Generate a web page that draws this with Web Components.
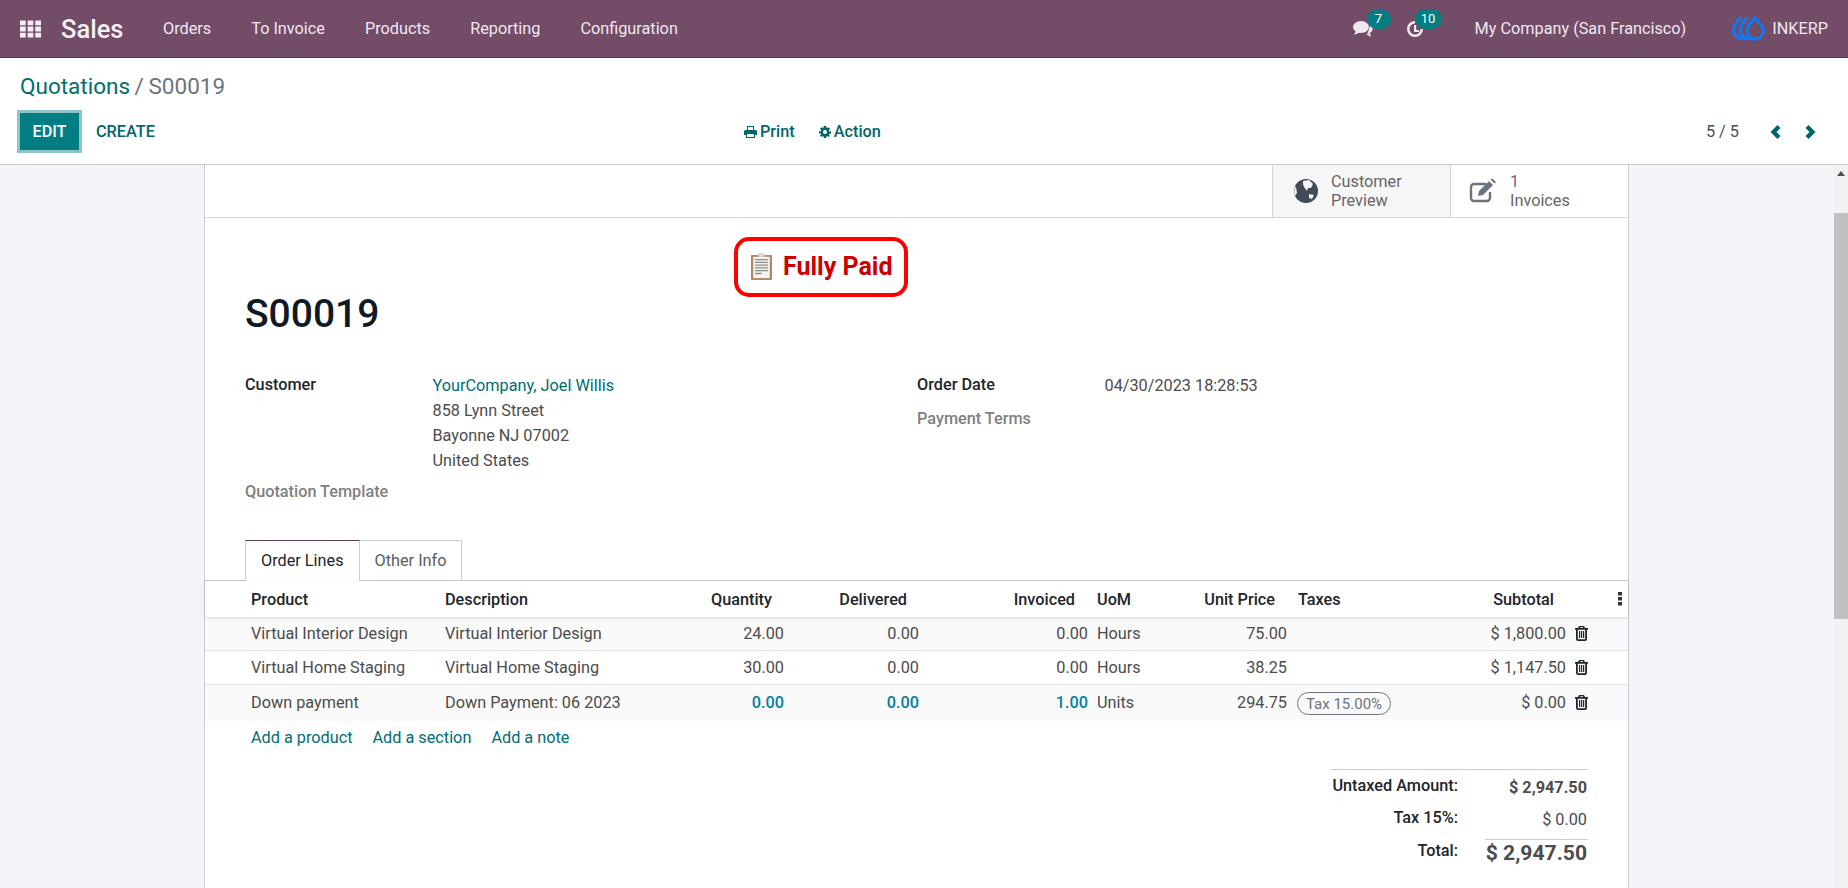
<!DOCTYPE html>
<html lang="en">
<head>
<meta charset="UTF-8">
<title>S00019 - Sales</title>
<style>
    html, body { margin: 0; height: 100%; overflow: hidden; }
    body { font: 16.25px Roboto, "Liberation Sans", sans-serif; color: #4c4c4c; }
</style>
</head>
<body>
<template id="sales-app">
    <style>
        :host { display: flex; flex-direction: column; height: 888px; }
        .main { display: flex; flex: 1; min-height: 0; }
        .view { flex: 1; min-width: 0; overflow: hidden; background: #f4f5f9; }
    </style>
    <sales-navbar></sales-navbar>
    <sales-control-panel></sales-control-panel>
    <div class="main">
        <div class="view"><slot></slot></div>
        <fake-scrollbar></fake-scrollbar>
    </div>
</template>

<template id="sales-navbar">
    <style>
        :host { display: flex; align-items: center; height: 57px; background: #734c67; border-bottom: 1px solid #55374c; color: #fff; }
        svg { display: block; fill: currentColor; }
        .apps { margin-left: 20px; width: 21px; height: 18px; color: #f4eff3; }
        .brand { margin-left: 20px; font-size: 25.500px; font-weight: 500; width: 102px; opacity: .92; }
        .menu { display: flex; gap: 40px; color: #f0e8ee; }
        .right { margin-left: auto; display: flex; align-items: center; color: #f0e8ee; }
        .sys { position: relative; width: 20px; height: 20px; margin-top: 2px; }
        .badge { position: absolute; top: -11px; left: 14px; height: 20px; min-width: 24px; padding: 0 1px; box-sizing: border-box; border-radius: 10px; background: #017e84; color: #fff; font-size: 13px; line-height: 19px; text-align: center; }
        .badge.wide { min-width: 27px; left: 9px; }
        .company { margin-left: 49px; }
        .logo { margin-left: 46px; width: 33px; height: 25px; fill: none; }
        .user { margin: 0 20px 0 7px; }
    </style>
    <svg class="apps" viewBox="0 0 22 18"><path d="M0 0h6v5H0zM8 0h6v5H8zM16 0h6v5h-6zM0 6.500h6v5H0zM8 6.500h6v5H8zM16 6.500h6v5h-6zM0 13h6v5H0zM8 13h6v5H8zM16 13h6v5h-6z"/></svg>
    <span class="brand">Sales</span>
    <nav class="menu"><span>Orders</span><span>To Invoice</span><span>Products</span><span>Reporting</span><span>Configuration</span></nav>
    <div class="right">
        <div class="sys">
            <svg width="20" height="18" viewBox="0 0 20 18"><ellipse cx="8" cy="7" rx="8" ry="6"/><path d="M3 11l-2 4 6-2.500zM13 14l5 3-1-4z"/><path d="M17.500 5c1.500 1 2.500 3 2 5-.3 1.500-2 3-5 3.500z"/></svg>
            <span class="badge">7</span>
        </div>
        <div class="sys" style="margin-left:33px">
            <svg width="18" height="18" viewBox="0 0 18 18"><path d="M9 1a8 8 0 1 0 8 8h-2.500A5.500 5.500 0 1 1 9 3.500z"/><path d="M8 5h2.200v5H13v2H8z"/></svg>
            <span class="badge wide">10</span>
        </div>
        <span class="company">My Company (San Francisco)</span>
        <svg class="logo" viewBox="0 0 33 25" stroke="#0b7bff" stroke-width="2.800" stroke-linecap="round"><path d="M23 2c-2 4-8 7-8 12 0 5 4 9 8 9 5 0 8.500-4 8.500-9 0-5-6.500-8-8.500-12z"/><path d="M15 2C11 6 8 10 8 14.500c0 5 5 8.500 14 8.500"/><path d="M8.500 2C4.500 6 1.500 10 1.500 14.500c0 5 5 8.500 12 8.500"/></svg>
        <span class="user">INKERP</span>
    </div>
</template>

<template id="sales-control-panel">
    <style>
        :host { display: block; height: 107px; box-sizing: border-box; background: #fff; border-bottom: 1px solid #c9ccd4; }
        .crumbs { height: 55px; padding: 15px 0 0 20px; box-sizing: border-box; font-size: 22.500px; line-height: 26px; word-spacing: -1px; color: #6c757d; }
        .crumbs b { font-weight: 400; color: #016d72; }
        .tools { display: grid; grid-template-columns: 744px auto 1fr; align-items: center; }
        .left, .mid, .pager { display: flex; align-items: center; font-weight: 500; }
        .left { padding-left: 20px; }
        .edit { background: #017e84; color: #fff; width: 59px; text-align: center; height: 37px; line-height: 37px; box-shadow: 0 0 0 3px #8cc4c7; }
        .create { margin-left: 17px; color: #01666b; }
        .mid { gap: 24px; color: #01666b; }
        .mid span { display: flex; align-items: center; gap: 3px; }
        svg { fill: currentColor; display: block; }
        .pager { justify-content: flex-end; font-weight: 400; padding-right: 32px; color: #4c4c4c; }
        .pager svg { color: #01666b; }
    </style>
    <div class="crumbs"><b>Quotations</b> / S00019</div>
    <div class="tools">
        <div class="left"><span class="edit">EDIT</span><span class="create">CREATE</span></div>
        <div class="mid">
            <span><svg width="13" height="12" viewBox="0 0 13 12"><path d="M3 0h7v4H9V1H4v3H3zM0 5.500C0 4.500 1 4 2 4h9c1 0 2 .5 2 1.500V9h-2v3H2V9H0zM3.200 8v3h6.600V8z"/></svg>Print</span>
            <span><svg width="12" height="12" viewBox="0 0 12 12"><path fill-rule="evenodd" d="M4.800 0h2.400l.3 1.600 1.100.5L10 1.200 11 3l-1.100 1.100.3 1.100 1.800.4v2l-1.800.4-.3 1.100L11 9.500 10 11l-1.400-.9-1.100.5-.3 1.400H4.800l-.3-1.400-1.100-.5L2 11 1 9.500l1.100-1.200-.3-1L0 7.600v-2l1.800-.4.3-1.100L1 3l1-1.800 1.400.9 1.100-.5zM6 4a2 2 0 1 0 0 4 2 2 0 0 0 0-4z"/></svg>Action</span>
        </div>
        <div class="pager">
            <span>5 / 5</span>
            <svg style="margin-left:31px" width="11" height="14" viewBox="0 0 11 14"><path d="M7.500 0L10.500 3 6.500 7 10.500 11 7.500 14 .5 7z"/></svg>
            <svg style="margin-left:24px" width="11" height="14" viewBox="0 0 11 14"><path d="M3.500 0L.5 3 4.500 7 .5 11 3.500 14 10.500 7z"/></svg>
        </div>
    </div>
</template>

<template id="fake-scrollbar">
    <style>
        :host { display: flex; flex-direction: column; align-items: center; width: 14px; background: #f1f1f1; }
        .up { width: 0; height: 0; margin-top: 6px; border: 4px solid transparent; border-top: 0; border-bottom: 5px solid #505050; }
        .thumb { margin-top: 37px; width: 100%; height: 406px; background: #c1c1c1; }
    </style>
    <div class="up"></div>
    <div class="thumb"></div>
</template>

<template id="form-sheet">
    <style>
        :host { display: block; width: 1425px; margin-left: 204px; box-sizing: border-box; height: 760px; background: #fff; border: solid #c9ccd4; border-width: 0 1px; }
        .buttons { display: flex; justify-content: flex-end; box-sizing: border-box; height: 53px; border-bottom: 1px solid #d5d5d5; }
        .head { padding-left: 40px; }
        .banner { margin: 19px 0 0 489px; height: 60px; }
        h1 { margin: -6px 0 0; font-size: 39px; line-height: 46px; font-weight: 500; color: #111827; }
        .fields { display: grid; grid-template-columns: 672px 1fr; margin-top: 36px; }
        .totals { display: flex; justify-content: flex-end; padding-right: 40px; margin-top: 16px; }
    </style>
    <div class="buttons"><slot name="buttons"></slot></div>
    <div class="head">
        <div class="banner"><slot name="banner"></slot></div>
        <h1><slot name="title"></slot></h1>
        <div class="fields"><div><slot name="col1"></slot></div><div><slot name="col2"></slot></div></div>
    </div>
    <slot name="tabs"></slot>
    <slot name="lines"></slot>
    <div class="totals"><slot name="totals"></slot></div>
</template>

<template id="stat-button">
    <style>
        :host { display: flex; align-items: center; width: 178px; box-sizing: border-box; border-left: 1px solid #d5d5d5; padding-left: 18px; gap: 14px; line-height: 19px; color: #666; }
        :host([active]) { background: #f6f6f6; }
        ::slotted(svg) { display: block; flex: none; }
    </style>
    <slot name="icon"></slot>
    <div><slot></slot></div>
</template>

<template id="paid-banner">
    <style>
        :host { display: inline-flex; align-items: center; gap: 10px; box-sizing: border-box; width: 174px; height: 60px; padding-left: 12px; border: 4px solid #f00; border-radius: 15px; color: #c00; font-size: 25px; font-weight: 700; white-space: nowrap; }
        svg { display: block; }
        span { position: relative; top: -1px; }
    </style>
    <svg width="23" height="28" viewBox="0 0 25 30"><rect x="1" y="2" width="23" height="27" rx="1" fill="#b08a64"/><rect x="3.500" y="4" width="18" height="23" fill="#f3f3f1"/><rect x="9" y="0" width="7" height="4" fill="#d9d5cf"/><path d="M5.500 7h14M5.500 10h14M5.500 13h14M5.500 16h14M5.500 19h14M5.500 22h7" stroke="#8d8d8d" stroke-width="1.500"/></svg>
    <span><slot></slot></span>
</template>

<template id="form-field">
    <style>
        :host { display: grid; grid-template-columns: 187.500px 1fr; }
        .label { font-weight: 500; color: #212529; line-height: 24px; }
        :host([empty]) .label { color: #808080; }
        .value { line-height: 25px; }
    </style>
    <div class="label"><slot name="label"></slot></div>
    <div class="value"><slot></slot></div>
</template>

<template id="form-tabs">
    <style>
        :host { display: flex; height: 41px; box-sizing: border-box; padding: 0 0 0 40px; margin-top: 36px; border-bottom: 1px solid #c9ccd4; }
    </style>
    <slot></slot>
</template>

<template id="form-tab">
    <style>
        :host { display: block; height: 40px; box-sizing: border-box; padding: 0 15px; line-height: 40px; border: 1px solid #c9ccd4; border-bottom: 0; margin-left: -1px; color: #5c5c5c; }
        :host([active]) { color: #212529; background: #fff; border-top-color: #5d4055; margin-left: 0; height: 41px; position: relative; }
    </style>
    <slot></slot>
</template>

<template id="order-lines">
    <style>
        :host { display: block; }
        .add { display: flex; gap: 20px; padding-left: 46px; height: 32px; line-height: 34px; color: #016d72; }
    </style>
    <slot></slot>
    <div class="add"><span>Add a product</span><span>Add a section</span><span>Add a note</span></div>
</template>

<template id="order-row">
    <style>
        :host { display: grid; grid-template-columns: 234px 215px 135px 135px 167px 74px 127px 125px 154px 57px; box-sizing: border-box; height: 34px; align-items: center; border-bottom: 1px solid #e4e4e4; }
        :host([alt]) { background: #fafafa; }
        :host([head]) { height: 36px; color: #212529; font-weight: 500; border-bottom: 0; box-shadow: 0 1px 3px rgba(0,0,0,.14); position: relative; }
        :host([last]) { height: 36px; padding-bottom: 2px; border-bottom: 0; }
    </style>
    <slot></slot>
</template>

<template id="order-cell">
    <style>
        :host { display: flex; align-items: center; min-width: 0; padding: 0 6px; white-space: nowrap; }
        :host(:first-child) { padding-left: 46px; }
        :host([num]) { justify-content: flex-end; padding-right: 5px; }
        :host([hnum]) { justify-content: flex-end; padding-right: 17px; }
        :host([blue]) { color: #0180a5; font-weight: 500; }
    </style>
    <slot></slot>
</template>

<template id="tax-tag">
    <style>
        :host { display: inline-block; height: 23px; line-height: 22px; box-sizing: border-box; padding: 0 8px; border: 1px solid #6c757d; border-radius: 12px; font-size: 15px; color: #6c757d; margin: 2px 0 0 -1px; }
    </style>
    <slot></slot>
</template>

<template id="order-totals">
    <style>
        :host { display: grid; grid-template-columns: 127px 130px; width: 257px; border-top: 1px solid #c9ccd4; align-items: start; }
        .l { font-weight: 500; color: #212529; text-align: right; }
        .v { text-align: right; padding-right: 1px; }
        .r { height: 32px; line-height: 32px; }
        .v.r { line-height: 35px; }
        .b { font-weight: 700; }
        .t { font-size: 21.100px; font-weight: 700; border-top: 1px solid #c9ccd4; margin: 5px 0 0 27px; height: 26px; line-height: 25px; white-space: nowrap; }
    </style>
    <div class="l r">Untaxed Amount:</div><div class="v r b">$ 2,947.50</div>
    <div class="l r">Tax 15%:</div><div class="v r">$ 0.00</div>
    <div class="l r" style="line-height:34px">Total:</div><div class="v t">$ 2,947.50</div>
</template>

<sales-app>
    <form-sheet>
        <stat-button slot="buttons" active>
            <svg slot="icon" style="margin:0 -1px 0 3px" width="24" height="24" viewBox="0 0 24 24"><circle cx="12" cy="12" r="12" fill="#434a5a"/><path d="M9 2l6-1 4 4-2 4-3 0-1 3-3-4-1-3zM15 15l5 1-2 4-3-1zM1 8c-1 3-1 6 0 9l2-3-1-6z" fill="#f6f6f6"/></svg>
            Customer<br>Preview
        </stat-button>
        <stat-button slot="buttons">
            <svg slot="icon" style="margin-right:-1px" width="28" height="24" viewBox="0 0 28 24" fill="none"><path d="M21 13v6a3 3 0 0 1-3 3H5a3 3 0 0 1-3-3V8a3 3 0 0 1 3-3h12" stroke="#6c7380" stroke-width="2.400"/><path d="M10 12L20 2l4 4-10 10-5 1zM21.500.5l4 4 1.500-1.500-4-4z" fill="#6c7380"/></svg>
            <span style="color:#875a7b">1</span><br>Invoices
        </stat-button>
        <paid-banner slot="banner">Fully Paid</paid-banner>
        <span slot="title">S00019</span>
        <div slot="col1">
            <form-field><span slot="label">Customer</span><span style="color:#016d72">YourCompany, Joel Willis</span><br>858 Lynn Street<br>Bayonne NJ 07002<br>United States</form-field>
            <form-field empty style="margin-top:7px"><span slot="label">Quotation Template</span></form-field>
        </div>
        <div slot="col2">
            <form-field><span slot="label">Order Date</span>04/30/2023 18:28:53</form-field>
            <form-field empty style="margin-top:9px"><span slot="label">Payment Terms</span></form-field>
        </div>
        <form-tabs slot="tabs"><form-tab active>Order Lines</form-tab><form-tab>Other Info</form-tab></form-tabs>
        <order-lines slot="lines">
            <order-row head>
                <order-cell>Product</order-cell><order-cell>Description</order-cell><order-cell hnum>Quantity</order-cell><order-cell hnum>Delivered</order-cell><order-cell hnum style="padding-right:16px">Invoiced</order-cell><order-cell>UoM</order-cell><order-cell hnum>Unit Price</order-cell><order-cell>Taxes</order-cell><order-cell hnum>Subtotal</order-cell>
                <order-cell><svg style="margin-left:41px" width="4" height="14" viewBox="0 0 4 14" fill="#333"><rect y="0" width="4" height="3.500"/><rect y="5" width="4" height="3.500"/><rect y="10" width="4" height="3.500"/></svg></order-cell>
            </order-row>
            <order-row alt>
                <order-cell>Virtual Interior Design</order-cell><order-cell>Virtual Interior Design</order-cell><order-cell num>24.00</order-cell><order-cell num>0.00</order-cell><order-cell num style="padding-right:3px">0.00</order-cell><order-cell>Hours</order-cell><order-cell num>75.00</order-cell><order-cell></order-cell><order-cell num>$ 1,800.00</order-cell>
                <order-cell><trash-icon></trash-icon></order-cell>
            </order-row>
            <order-row>
                <order-cell>Virtual Home Staging</order-cell><order-cell>Virtual Home Staging</order-cell><order-cell num>30.00</order-cell><order-cell num>0.00</order-cell><order-cell num style="padding-right:3px">0.00</order-cell><order-cell>Hours</order-cell><order-cell num>38.25</order-cell><order-cell></order-cell><order-cell num>$ 1,147.50</order-cell>
                <order-cell><trash-icon></trash-icon></order-cell>
            </order-row>
            <order-row alt last>
                <order-cell>Down payment</order-cell><order-cell>Down Payment: 06 2023</order-cell><order-cell num blue>0.00</order-cell><order-cell num blue>0.00</order-cell><order-cell num blue style="padding-right:3px">1.00</order-cell><order-cell>Units</order-cell><order-cell num>294.75</order-cell><order-cell><tax-tag>Tax 15.00%</tax-tag></order-cell><order-cell num>$ 0.00</order-cell>
                <order-cell><trash-icon></trash-icon></order-cell>
            </order-row>
        </order-lines>
        <order-totals slot="totals"></order-totals>
    </form-sheet>
</sales-app>

<script>
    for (let template of document.querySelectorAll("template[id]")) {
        customElements.define(
            template.id,
            class extends HTMLElement {
                constructor() {
                    super().attachShadow({ mode: "open" }).append(template.content.cloneNode(true));
                }
            },
        );
    }
    customElements.define(
        "trash-icon",
        class extends HTMLElement {
            constructor() {
                super().attachShadow({ mode: "open" }).innerHTML = `
                    <style>:host { display: block; margin-left: -2px; } svg { display: block; }</style>
                    <svg width="13" height="15" viewBox="0 0 13 15" fill="#1f2733"><path fill-rule="evenodd" d="M4 0h5l1 2h3v1.800h-1V13a2 2 0 0 1-2 2H3a2 2 0 0 1-2-2V3.800H0V2h3zM5.200 1.200L4.700 2h3.600l-.5-.8zM2.800 3.800V13c0 .2.100.3.300.3h6.800c.2 0 .3-.1.300-.3V3.800z"/><path d="M4 5h1.200v7H4zM6 5h1.200v7H6zM8 5h1.200v7H8z"/></svg>`;
            }
        },
    );
</script>
</body>
</html>
